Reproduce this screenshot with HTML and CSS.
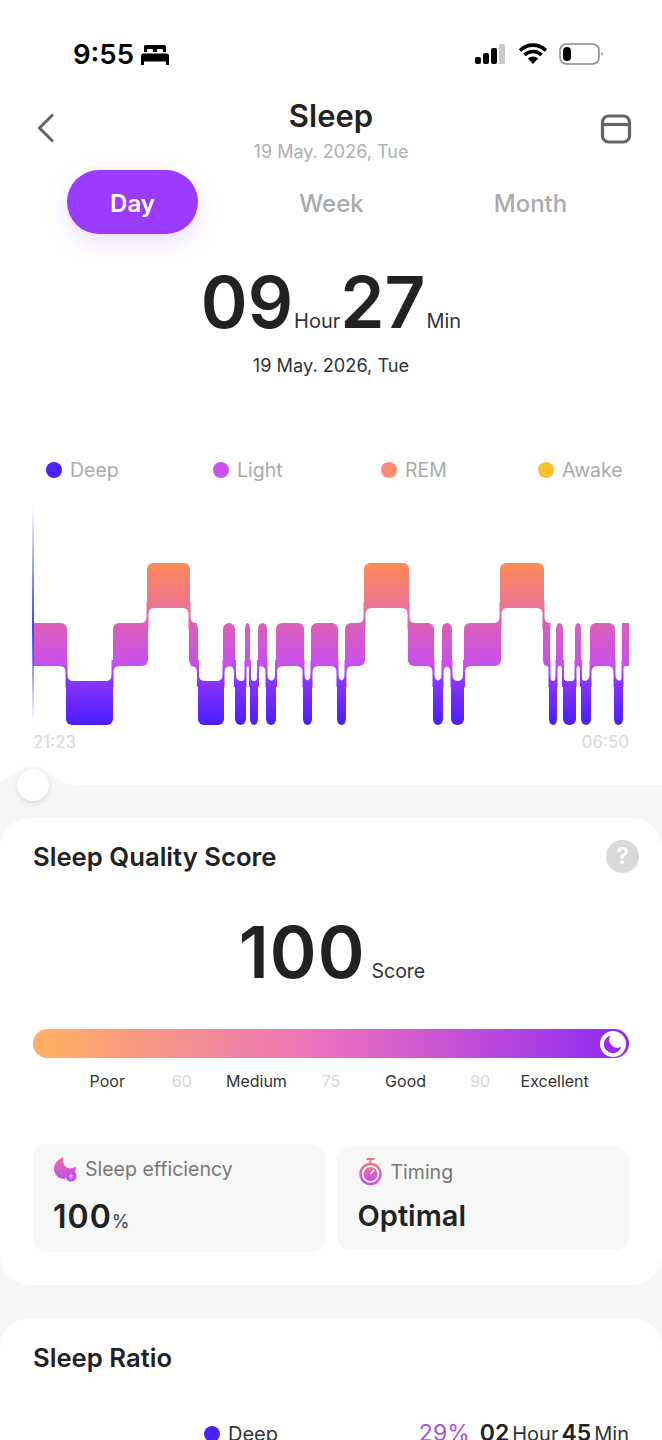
FILE: index.html
```html
<!DOCTYPE html>
<html>
	<head>
		<title>Sleep</title>
		<meta charset="utf-8"/>
		<meta name="viewport" content="width=device-width, initial-scale=1"/>
		<link rel="stylesheet" href="styles.css">
	</head>
	<body>
		<div class="status">
			<div class="status-left">
				<span class="clock">9:55</span>
				<svg class="bed" width="28" height="20" viewBox="0 0 28 20">
					<path d="M3 1.500Q3 0 4.500 0H23.500Q25 0 25 1.500V7H22V5Q22 4 21 4H17Q16 4 16 5V7H12V5Q12 4 11 4H7Q6 4 6 5V7H3Z"/>
					<path d="M2.500 8.500H25.500Q28 8.500 28 11V20H25V16.500H3V20H0V11Q0 8.500 2.500 8.500Z"/>
				</svg>
			</div>
			<div class="status-right">
				<svg width="32" height="22" viewBox="0 0 32 22">
					<rect x="0" y="14" width="6" height="7" rx="2"/>
					<rect x="8" y="10" width="6" height="11" rx="2"/>
					<rect x="16" y="5" width="6" height="16" rx="2"/>
					<rect x="24" y="1" width="6" height="20" rx="1" fill="#ccc"/>
				</svg>
				<svg width="28" height="22" viewBox="0 0 28 22">
					<path d="M1 7.500A18.500 18.500 0 0 1 27 7.500M5.500 12A12 12 0 0 1 22.500 12" fill="none" stroke="#000" stroke-width="3.600"/>
					<path d="M8.800 15.500A7.500 7.500 0 0 1 19.200 15.500L14 21Z"/>
				</svg>
				<svg width="44" height="22" viewBox="0 0 44 22">
					<rect x="1" y="1" width="39" height="20" rx="6.500" fill="none" stroke="#888" stroke-width="1.500"/>
					<rect x="4" y="4" width="8" height="14" rx="4"/>
					<path d="M42.500 9Q44 10 44 11T42.500 13Z" fill="#888"/>
				</svg>
			</div>
		</div>

		<header class="header">
			<svg class="back" width="18" height="30" viewBox="0 0 18 30">
				<path d="M16 1.500L2.500 15L16 28.500" fill="none" stroke="#666" stroke-width="3"/>
			</svg>
			<div class="heading">
				<h1>Sleep</h1>
				<div class="heading-date">19 May. 2026, Tue</div>
			</div>
			<svg class="calendar" width="32" height="30" viewBox="0 0 32 30">
				<rect x="2.500" y="2" width="27" height="26" rx="6" fill="none" stroke="#666" stroke-width="3.200"/>
				<path d="M2.500 10.500H29.500" stroke="#666" stroke-width="3.200"/>
			</svg>
		</header>

		<nav class="tabs">
			<span class="tab active">Day</span>
			<span class="tab">Week</span>
			<span class="tab">Month</span>
		</nav>

		<div class="duration">
			<span class="big">09</span><span class="unit">Hour</span><span class="big">27</span><span class="unit unit-min">Min</span>
		</div>
		<div class="duration-date">19 May. 2026, Tue</div>

		<div class="legend">
			<span><i class="dot deep"></i>Deep</span>
			<span><i class="dot light"></i>Light</span>
			<span><i class="dot rem"></i>REM</span>
			<span><i class="dot awake"></i>Awake</span>
		</div>

		<svg class="chart" width="662" height="232" viewBox="0 500 662 232">
			<defs>
				<linearGradient id="sleep" gradientUnits="userSpaceOnUse" x1="0" y1="563" x2="0" y2="725">
					<stop offset="0" stop-color="#ff8a58"/>
					<stop offset="0.28" stop-color="#ea7295"/>
					<stop offset="0.37" stop-color="#dc60b8"/>
					<stop offset="0.63" stop-color="#c74fee"/>
					<stop offset="0.73" stop-color="#8a35fb"/>
					<stop offset="1" stop-color="#4a1dff"/>
				</linearGradient>
				<linearGradient id="cursor" x1="0" y1="0" x2="0" y2="1">
					<stop offset="0" stop-color="#3c46ee" stop-opacity="0"/>
					<stop offset="0.55" stop-color="#3c46ee"/>
					<stop offset="1" stop-color="#3c46ee" stop-opacity="0"/>
				</linearGradient>
				<path id="step-deep" d="M-7 660H1V675Q1 681 7 681V687H-1V672Q-1 666 -7 666Z"/>
				<path id="step-thin" d="M-3 660H1V678Q1 681 4 681V687H-1V669Q-1 666 -3 666Z"/>
				<path id="step-rem" d="M-7 602H1V617Q1 623 7 623V629H-1V614Q-1 608 -7 608Z"/>
			</defs>
			<g fill="url(#sleep)">
				<!-- rem -->
				<rect x="147" y="563" width="43" height="45" rx="6" ry="6"/>
				<rect x="364" y="563" width="45" height="45" rx="6" ry="6"/>
				<rect x="500" y="563" width="44" height="45" rx="6" ry="6"/>
				<!-- light -->
				<rect x="33" y="623" width="10" height="43"/>
				<rect x="33" y="623" width="34" height="43" rx="6" ry="6"/>
				<rect x="113" y="623" width="35" height="43" rx="6" ry="6"/>
				<rect x="189" y="623" width="9" height="43" rx="6" ry="6"/>
				<rect x="223" y="623" width="12" height="43" rx="6" ry="6"/>
				<rect x="245" y="623" width="5" height="43" rx="6" ry="6"/>
				<rect x="258" y="623" width="9" height="43" rx="6" ry="6"/>
				<rect x="276" y="623" width="28" height="43" rx="6" ry="6"/>
				<rect x="311" y="623" width="27" height="43" rx="6" ry="6"/>
				<rect x="345" y="623" width="20" height="43" rx="6" ry="6"/>
				<rect x="408" y="623" width="26" height="43" rx="6" ry="6"/>
				<rect x="442" y="623" width="10" height="43" rx="6" ry="6"/>
				<rect x="464" y="623" width="37" height="43" rx="6" ry="6"/>
				<rect x="543" y="623" width="7" height="43" rx="6" ry="6"/>
				<rect x="556" y="623" width="7" height="43" rx="6" ry="6"/>
				<rect x="575" y="623" width="6" height="43" rx="6" ry="6"/>
				<rect x="590" y="623" width="25" height="43" rx="6" ry="6"/>
				<rect x="622" y="623" width="7" height="43"/>
				<!-- deep -->
				<rect x="66" y="681" width="47" height="44" rx="6" ry="6"/>
				<rect x="198" y="681" width="26" height="44" rx="6" ry="6"/>
				<rect x="235" y="681" width="11" height="44" rx="6" ry="6"/>
				<rect x="250" y="681" width="8" height="44" rx="6" ry="6"/>
				<rect x="266" y="681" width="10" height="44" rx="6" ry="6"/>
				<rect x="303" y="681" width="9" height="44" rx="6" ry="6"/>
				<rect x="337" y="681" width="9" height="44" rx="6" ry="6"/>
				<rect x="433" y="681" width="10" height="44" rx="6" ry="6"/>
				<rect x="451" y="681" width="13" height="44" rx="6" ry="6"/>
				<rect x="549" y="681" width="8" height="44" rx="6" ry="6"/>
				<rect x="563" y="681" width="13" height="44" rx="6" ry="6"/>
				<rect x="581" y="681" width="10" height="44" rx="6" ry="6"/>
				<rect x="614" y="681" width="9" height="44" rx="6" ry="6"/>
				<!-- steps between stages -->
				<use href="#step-deep" transform="translate(66.500 0)"/>
				<use href="#step-deep" transform="translate(112.500 0) scale(-1 1)"/>
				<use href="#step-rem" transform="translate(147.500 0) scale(-1 1)"/>
				<use href="#step-rem" transform="translate(189.500 0)"/>
				<use href="#step-deep" transform="translate(198 0)"/>
				<use href="#step-deep" transform="translate(223.500 0) scale(-1 1)"/>
				<use href="#step-deep" transform="translate(235 0)"/>
				<use href="#step-thin" transform="translate(245.500 0) scale(-1 1)"/>
				<use href="#step-thin" transform="translate(250 0)"/>
				<use href="#step-thin" transform="translate(258 0) scale(-1 1)"/>
				<use href="#step-deep" transform="translate(266.500 0)"/>
				<use href="#step-deep" transform="translate(276 0) scale(-1 1)"/>
				<use href="#step-deep" transform="translate(303.500 0)"/>
				<use href="#step-deep" transform="translate(311.500 0) scale(-1 1)"/>
				<use href="#step-deep" transform="translate(337.500 0)"/>
				<use href="#step-deep" transform="translate(345.500 0) scale(-1 1)"/>
				<use href="#step-rem" transform="translate(364.500 0) scale(-1 1)"/>
				<use href="#step-rem" transform="translate(408.500 0)"/>
				<use href="#step-deep" transform="translate(433.500 0)"/>
				<use href="#step-deep" transform="translate(442.500 0) scale(-1 1)"/>
				<use href="#step-deep" transform="translate(451.500 0)"/>
				<use href="#step-deep" transform="translate(464 0) scale(-1 1)"/>
				<use href="#step-rem" transform="translate(500.500 0) scale(-1 1)"/>
				<use href="#step-rem" transform="translate(543.500 0)"/>
				<use href="#step-thin" transform="translate(549.500 0)"/>
				<use href="#step-thin" transform="translate(556.500 0) scale(-1 1)"/>
				<use href="#step-thin" transform="translate(563 0)"/>
				<use href="#step-thin" transform="translate(575.500 0) scale(-1 1)"/>
				<use href="#step-thin" transform="translate(581 0)"/>
				<use href="#step-deep" transform="translate(590.500 0) scale(-1 1)"/>
				<use href="#step-deep" transform="translate(614.500 0)"/>
				<use href="#step-thin" transform="translate(622.500 0) scale(-1 1)"/>
			</g>
			<rect x="32" y="505" width="2" height="218" fill="url(#cursor)"/>
		</svg>
		<div class="chart-times">
			<span>21:23</span>
			<span>06:50</span>
		</div>

		<main class="content">
			<svg class="hump" width="80" height="20" viewBox="0 0 80 20">
				<path d="M0 17C11 12 19 1 33 1C50 1 52 19 76 20H0Z"/>
			</svg>
			<div class="knob"></div>

			<section class="card">
				<div class="card-title">
					<h2>Sleep Quality Score</h2>
					<span class="help">?</span>
				</div>
				<div class="score">
					<span class="big">100</span><span class="unit">Score</span>
				</div>
				<div class="score-bar">
					<svg width="26" height="26" viewBox="0 0 26 26">
						<circle cx="13" cy="13" r="13" fill="#fff"/>
						<path d="M10.500 4.500A9 9 0 1 0 21.500 15.500A8 8 0 0 1 10.500 4.500Z" fill="#9a2cf0"/>
					</svg>
				</div>
				<div class="score-labels">
					<span>Poor</span>
					<span class="mark">60</span>
					<span>Medium</span>
					<span class="mark">75</span>
					<span>Good</span>
					<span class="mark">90</span>
					<span>Excellent</span>
				</div>
				<div class="stats">
					<div class="stat stat-tall">
						<div class="stat-label">
							<svg width="25" height="26" viewBox="0 0 25 26">
								<defs>
									<linearGradient id="flame" x1="0" y1="0" x2="0" y2="1">
										<stop offset="0" stop-color="#f06fa8"/>
										<stop offset="1" stop-color="#c04ff0"/>
									</linearGradient>
								</defs>
								<path d="M10 1C6 3 1 7 1 13C1 19 6 23 12 23C13 19 16 16 22 16C23 14 23 12 22.500 10.500C20 12.500 16 13 13 11C10.500 9 9.500 5 10 1Z" fill="url(#flame)"/>
								<circle cx="18" cy="20" r="5.500" fill="#c04ff0"/>
								<path d="M18.800 16.800L16 20.500H18L17.200 23.200L20 19.500H18Z" fill="#fff"/>
							</svg>
							Sleep efficiency
						</div>
						<div class="stat-value stat-number">100<small>%</small></div>
					</div>
					<div class="stat">
						<div class="stat-label">
							<svg width="25" height="28" viewBox="0 0 25 28">
								<defs>
									<linearGradient id="watch" x1="0" y1="0" x2="0" y2="1">
										<stop offset="0" stop-color="#f2748f"/>
										<stop offset="1" stop-color="#c54ff0"/>
									</linearGradient>
								</defs>
								<path d="M8.500 1H16.500M12.500 1V5" stroke="#f2748f" stroke-width="2" fill="none"/>
								<circle cx="12.500" cy="16" r="10" fill="none" stroke="url(#watch)" stroke-width="2.400"/>
								<circle cx="12.500" cy="16" r="7" fill="url(#watch)"/>
								<path d="M12.500 16L16 12" stroke="#fff" stroke-width="1.600"/>
							</svg>
							Timing
						</div>
						<div class="stat-value">Optimal</div>
					</div>
				</div>
			</section>

			<section class="card card-ratio">
				<div class="card-title">
					<h2>Sleep Ratio</h2>
				</div>
				<div class="ratio-row">
					<span class="ratio-name"><i class="dot deep"></i>Deep</span>
					<span class="ratio-value">
						<span class="ratio-pct">29%</span>
						<b>02</b><span>Hour</span><b>45</b><span>Min</span>
					</span>
				</div>
			</section>
		</main>
	</body>
</html>
```
FILE: styles.css
```css
html, body {
	margin: 0;
	padding: 0;
}

body {
	width: 662px;
	height: 1440px;
	overflow: hidden;
	background: #fff;
	color: #222;
	font-family: Inter, 'Liberation Sans', sans-serif;
}

h1, h2 {
	margin: 0;
	font-weight: 600;
}

/* status bar */
.status {
	height: 80px;
	box-sizing: border-box;
	padding: 38px 59px 0 73px;
	display: flex;
	justify-content: space-between;
	align-items: flex-start;
	color: #000;
}

.status-left {
	display: flex;
	align-items: center;
	gap: 7px;
	height: 32px;
}

.clock {
	font-size: 27.500px;
	font-weight: 600;
}

.bed {
	margin-top: 2px;
}

.status-right {
	display: flex;
	align-items: center;
	gap: 12px;
	height: 32px;
}

/* header */
.header {
	display: grid;
	grid-template-columns: 1fr auto 1fr;
	padding: 18px 30px 0;
}

.back {
	margin: 15px 0 0 7px;
}

.calendar {
	margin-top: 16px;
	justify-self: end;
}

.heading {
	text-align: center;
}

.heading h1 {
	font-size: 31px;
	line-height: 36px;
	color: #222;
}

.heading-date {
	margin-top: 6px;
	font-size: 18px;
	line-height: 24px;
	color: #b0b0b0;
}

.tabs {
	margin-top: 6px;
	padding: 0 32px 0 33px;
	display: grid;
	grid-template-columns: repeat(3, 1fr);
	justify-items: center;
}

.tab {
	width: 131px;
	height: 64px;
	border-radius: 32px;
	font-size: 24px;
	font-weight: 500;
	line-height: 67px;
	text-align: center;
	color: #aaa;
}

.tab.active {
	background: #9b3bff;
	color: #fff;
	font-weight: 600;
	box-shadow: 0 8px 22px rgba(155, 59, 255, 0.18);
}

/* totals */
.duration,
.score {
	display: flex;
	justify-content: center;
	align-items: baseline;
}

.duration {
	margin-top: 32px;
}

.big {
	font-size: 71px;
	line-height: 72px;
	font-weight: 600;
}

.unit {
	margin-left: 1px;
	font-size: 20px;
	color: #333;
}

.unit-min {
	margin-left: 1px;
}

.duration-date {
	margin-top: 15px;
	font-size: 18.200px;
	line-height: 24px;
	text-align: center;
	color: #333;
}

.legend {
	margin-top: 81px;
	padding-left: 46px;
	display: grid;
	grid-template-columns: 167px 168px 157px auto;
	font-size: 19.500px;
	line-height: 24px;
	color: #aaa;
}

.legend span,
.ratio-name {
	display: flex;
	align-items: center;
	gap: 8px;
}

.dot {
	width: 16px;
	height: 16px;
	border-radius: 50%;
	display: block;
}

.dot.deep {
	background: #4a22ff;
}

.dot.light {
	background: #c953ee;
}

.dot.rem {
	background: #ff8a72;
}

.dot.awake {
	background: #ffc02e;
}

.chart {
	display: block;
	margin-top: 18px;
}

.chart-times {
	height: 20px;
	padding: 0 33px;
	display: flex;
	justify-content: space-between;
	font-size: 17px;
	line-height: 20px;
	color: #d8d8d8;
	margin-bottom: 33px;
}

/* lower part */
.content {
	position: relative;
	background: #f6f6f6;
	padding-top: 33px;
}

.hump {
	position: absolute;
	left: 0;
	top: -20px;
	fill: #f6f6f6;
}

.knob {
	position: absolute;
	left: 17px;
	top: -16px;
	width: 32px;
	height: 32px;
	border-radius: 50%;
	background: #fff;
	box-shadow: 0 2px 5px rgba(0, 0, 0, 0.12);
}

.card {
	height: 467px;
	box-sizing: border-box;
	padding: 22px 33px 0;
	background: #fff;
	border-radius: 30px;
}

.card-ratio {
	margin-top: 33px;
	padding-top: 24px;
}

.card-title {
	display: flex;
	justify-content: space-between;
	align-items: center;
}

.card-title h2 {
	font-size: 25.700px;
	line-height: 32px;
}

.help {
	width: 33px;
	height: 33px;
	margin-right: -10px;
	border-radius: 50%;
	background: #d9d9d9;
	color: #fff;
	font-size: 23px;
	font-weight: 600;
	line-height: 33px;
	text-align: center;
}

.score {
	margin-top: 43px;
	padding-left: 2px;
}

.score .big {
	letter-spacing: 1px;
}

.score .unit {
	margin-left: 6px;
	font-size: 19.500px;
}

.score-bar {
	margin-top: 41px;
	height: 29px;
	border-radius: 15px;
	padding-right: 3px;
	display: flex;
	justify-content: flex-end;
	align-items: center;
	background: linear-gradient(90deg, #ffad66 3%, #e96fc0 50%, #8f28f3 100%);
}

.score-labels {
	margin-top: 13px;
	padding: 0 37px;
	display: grid;
	grid-template-columns: repeat(7, 1fr);
	font-size: 16px;
	line-height: 20px;
	text-align: center;
	color: #333;
}

.mark {
	color: #d5d5d5;
}

.stats {
	margin-top: 53px;
	display: flex;
	align-items: center;
	gap: 12px;
}

.stat {
	flex: 1;
	height: 103px;
	box-sizing: border-box;
	padding: 11px 0 0 21px;
	background: #f7f7f7;
	border-radius: 14px;
}

.stat-tall {
	height: 108px;
	padding: 12px 0 0 20px;
}

.stat-label {
	display: flex;
	align-items: center;
	gap: 8px;
	font-size: 19.500px;
	line-height: 24px;
	color: #777;
}

.stat-tall .stat-label {
	gap: 7px;
}

.stat-value {
	margin-top: 10px;
	font-size: 29px;
	line-height: 40px;
	font-weight: 600;
	color: #222;
}

.stat-number {
	margin-top: 15px;
	font-size: 32px;
	letter-spacing: 1px;
}

.stat-value small {
	font-size: 18px;
	font-weight: 400;
	letter-spacing: 0;
	color: #444;
}

.ratio-row {
	margin-top: 47px;
	padding-left: 171px;
	display: flex;
	justify-content: space-between;
	font-size: 20px;
	line-height: 24px;
	color: #333;
}

.ratio-value {
	display: flex;
	align-items: baseline;
	gap: 3px;
}

.ratio-pct {
	margin-right: 7px;
	font-size: 23px;
	color: #a94ee8;
}

.ratio-value b {
	font-size: 23px;
	font-weight: 600;
	color: #222;
}
```
